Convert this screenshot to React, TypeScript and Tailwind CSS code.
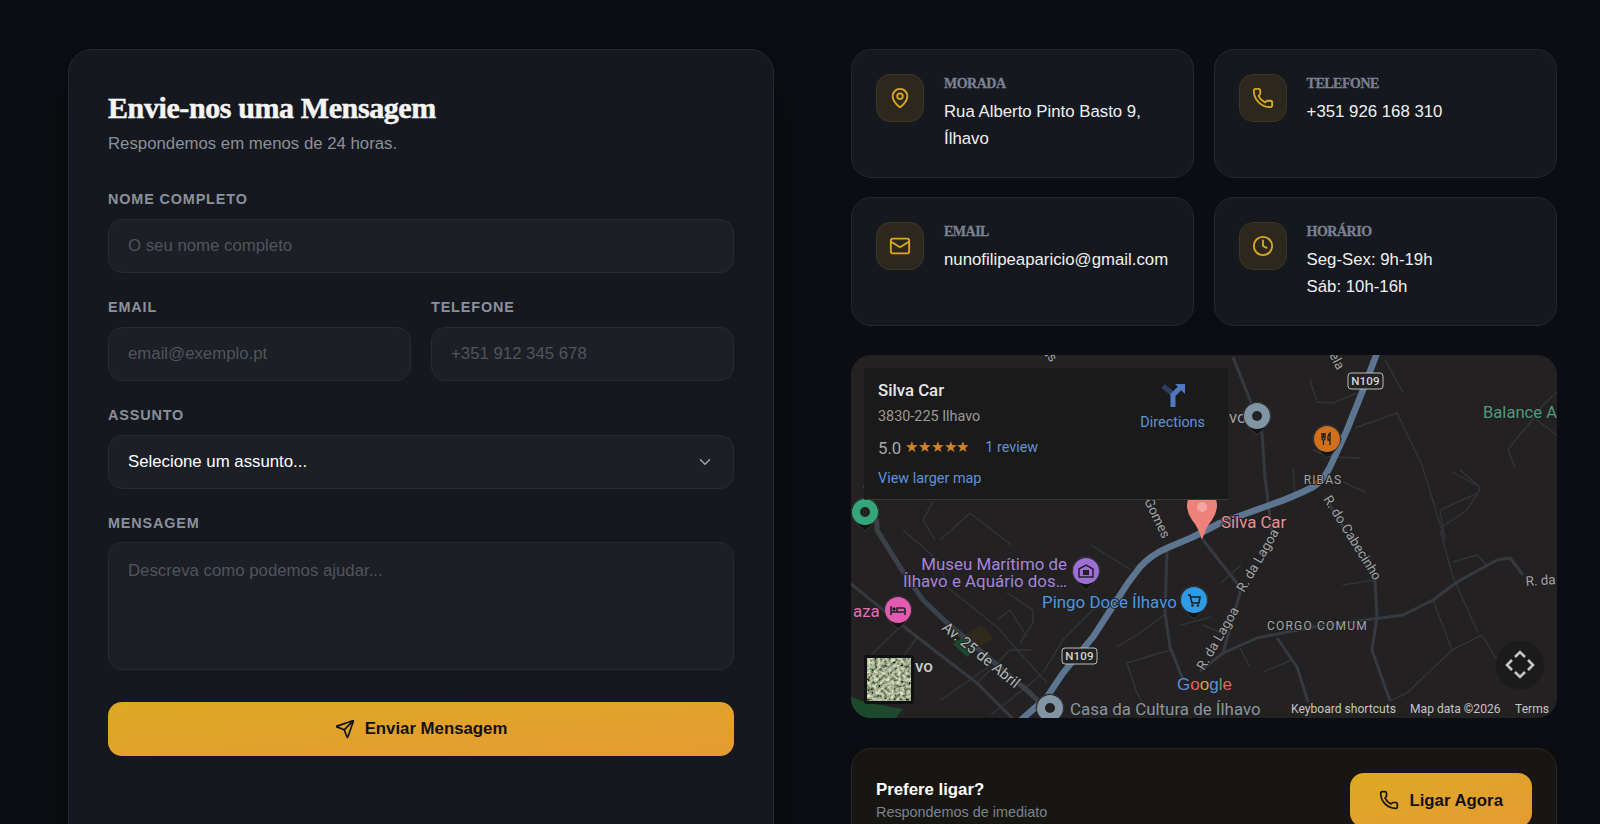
import React from 'react';
import { ChevronDown, Clock, Mail, MapPin, Phone, Send } from 'lucide-react';

const inputClass =
  "w-full h-[54px] rounded-[14px] border border-[#272a33] bg-[#1c1f26] px-[19px] text-[16.8px] text-white outline-none placeholder:text-[#50545c]";

const Label: React.FC<{ children: React.ReactNode }> = ({ children }) => (
  <label className="block mb-[10px] h-5 text-[14.4px] leading-5 font-bold uppercase tracking-[0.06em] text-[#8b909a]">
    {children}
  </label>
);

interface InfoCardProps {
  icon: React.ReactNode;
  title: string;
  lines: string[];
}

const InfoCard: React.FC<InfoCardProps> = ({ icon, title, lines }) => (
  <div className="flex min-h-[129px] gap-5 rounded-[20px] border border-[#242730] bg-[#15181f] p-6">
    <div className="flex h-12 w-12 shrink-0 items-center justify-center rounded-[14px] border border-[#3e3623] bg-[#2d281d] text-[#dca823]">
      {icon}
    </div>
    <div>
      <div className="mb-1 h-5 font-['Liberation_Serif'] text-sm leading-5 font-bold uppercase tracking-[-0.5px] text-[#7b8090] [-webkit-text-stroke:0.3px]">{title}</div>
      {lines.map((line) => (
        <div key={line} className="text-[16.8px] leading-[27.2px] text-[#f0f0f0]">{line}</div>
      ))}
    </div>
  </div>
);

const mainRoad = "M526,-2 L512,35 L496,75 L479,112 Q472,126 462,132 Q440,143 419,150 L369,168 L342,182 L316,193 Q300,200 289,212 Q276,228 266,245 L242,282 L212,318 L196,342 L169,366";

const avenue = "M14,130 L26,168 L26,175 L49,212 L72,245 L96,268 L132,298 L179,338 L199,358";

const wideRoads = [
  "M372,298 L406,283 L462,272 L522,264 L552,260 L582,245 L606,227 L646,205 L659,203 L672,220",
  "M352,185 L389,232 L389,238 L372,298 L349,316",
  "M474,142 L524,225 L526,262 L521,295 L539,346",
  "M-1,228 L36,258 L66,282 L126,328 L162,364",
  "M316,195 L314,258 L319,292 L332,325",
  "M426,283 L446,312 L457,347",
  "M382,2 L399,45 L411,78 L414,122 L421,178",
];

const thinRoads = [
  "M459,25 L466,47 L482,48 L506,38",
  "M504,73 L546,58 L571,110 L594,185",
  "M534,5 L552,37",
  "M462,95 L479,102 L509,103",
  "M442,112 L444,142",
  "M492,127 L514,137",
  "M706,37 L692,50 L679,68 L666,83 L657,95 L664,113",
  "M686,65 L706,80",
  "M601,117 L629,132 L627,138 L589,155 L594,185",
  "M609,115 L629,132",
  "M627,138 L616,155 L591,172",
  "M492,230 L524,225",
  "M582,245 L601,295 L556,338 L539,346",
  "M601,295 L631,280 L646,305",
  "M589,175 L602,222 L627,278",
  "M602,207 L626,200 L636,210",
  "M389,293 L399,312",
  "M412,317 L441,305",
  "M52,175 L72,192 L89,208 L96,232 L146,272 L196,328",
  "M156,238 L182,255 L182,268 L169,288",
  "M146,265 L159,255 L176,282",
  "M192,318 L212,285 L242,255 L272,238",
  "M276,308 L319,295",
  "M266,292 L289,278 L316,258",
  "M276,308 L286,338 L299,362",
  "M126,328 L159,295 L180,295",
  "M82,147 L72,165 L84,185",
  "M89,185 L119,158 L160,190",
  "M49,272 L20,300",
  "M66,282 L40,320",
  "M240,190 L280,215",
  "M90,345 L140,310",
  "M140,360 L190,320",
  "M330,270 L360,262",
  "M370,228 L390,210",
  "M352,270 L375,280",
];

const Pin: React.FC<{ x: number; y: number; r?: number; color: string; children?: React.ReactNode }> = ({ x, y, r = 10, color, children }) => (
  <g transform={`translate(${x} ${y})`}>
    <path
      d={`M${-(r + 4)},0 A${r + 4},${r + 4} 0 1 1 ${r + 4},0 Q${r + 3},${r - 1} 0,${r + 9} Q${-(r + 3)},${r - 1} ${-(r + 4)},0 Z`}
      fill="#141414"
      stroke="#3a3a3a"
      strokeWidth={1}
    />
    <circle r={r + 3} fill={color} />
    {children}
  </g>
);

const MapLabel: React.FC<{ x: number; y: number; rot?: number; size?: number; fill?: string; anchor?: 'start' | 'middle' | 'end'; spacing?: number; weight?: number; children: React.ReactNode }> = ({
  x, y, rot = 0, size = 13.4, fill = '#a0a4a8', anchor = 'start', spacing = 0, weight = 400, children,
}) => (
  <text
    x={x}
    y={y}
    transform={rot ? `rotate(${rot} ${x} ${y})` : undefined}
    fontSize={size}
    fill={fill}
    textAnchor={anchor}
    letterSpacing={spacing}
    fontWeight={weight}
    stroke="#212020"
    strokeWidth={2}
    paintOrder="stroke"
  >
    {children}
  </text>
);

const RoadBadge: React.FC<{ x: number; y: number }> = ({ x, y }) => (
  <g>
    <rect x={x} y={y} width={35} height={16} rx={3} fill="#222" stroke="#bdbdbd" strokeWidth={1} />
    <text x={x + 17.5} y={y + 12} textAnchor="middle" fontSize={11.5} fontWeight={500} letterSpacing={0.2} fill="#d4d4d4">N109</text>
  </g>
);

const GoogleMap: React.FC = () => (
  <div className="relative mt-[29px] h-[363px] overflow-hidden rounded-[20px] bg-[#232122] font-['Roboto']">
    <svg viewBox="0 0 706 363" className="block h-full w-full">
      <defs>
        <filter id="sat" x="0" y="0" width="100%" height="100%">
          <feTurbulence type="fractalNoise" baseFrequency="0.3" numOctaves="3" seed="11" />
          <feColorMatrix values="1.3 0.3 0 0 -0.42  1.3 0.35 0 0 -0.4  1 0.3 0 0 -0.36  0 0 0 0 1" />
        </filter>
      </defs>

      {/* parks */}
      <path d="M-2,340 Q10,348 30,350 L52,354 L42,366 L-2,366 Z" fill="#1d4a2c" />
      <path d="M102,289 L114,280 L127,293 L116,302 Z" fill="#1d4a2c" />
      <path d="M114,280 L130,270 L143,283 L127,293 Z" fill="#302a1c" />

      {thinRoads.map((d) => (
        <path key={d} d={d} fill="none" stroke="#31353a" strokeWidth={1.4} strokeLinejoin="round" />
      ))}
      {wideRoads.map((d) => (
        <path key={d} d={d} fill="none" stroke="#353a40" strokeWidth={3} strokeLinejoin="round" />
      ))}
      <path d={avenue} fill="none" stroke="#3a4149" strokeWidth={5} strokeLinejoin="round" />
      <path d={mainRoad} fill="none" stroke="#5d7590" strokeWidth={6.5} strokeLinejoin="round" />

      <RoadBadge x={497} y={18} />
      <RoadBadge x={211} y={293} />

      <MapLabel x={191} y={-3} rot={50}>as</MapLabel>
      <MapLabel x={478} y={0} rot={62}>ela</MapLabel>
      <MapLabel x={378} y={68} size={16.8} fill="#9aa0a6">vo</MapLabel>
      <MapLabel x={632} y={63} size={16.6} fill="#4f9b7c">Balance A</MapLabel>
      <MapLabel x={472} y={129} size={12} anchor="middle" spacing={1.1}>RIBAS</MapLabel>
      <MapLabel x={472} y={144} rot={58}>R. do Cabecinho</MapLabel>
      <MapLabel x={393} y={238} rot={-60}>R. da Lagoa</MapLabel>
      <MapLabel x={353} y={316} rot={-60}>R. da Lagoa</MapLabel>
      <MapLabel x={675} y={231} rot={-4}>R. da</MapLabel>
      <MapLabel x={416} y={275} size={12} spacing={1.2}>CORGO COMUM</MapLabel>
      <MapLabel x={293} y={146} rot={64}>Gomes</MapLabel>
      <MapLabel x={90} y={274} size={15} rot={39} fill="#b4b8bc">Av. 25 de Abril</MapLabel>

      <MapLabel x={216} y={215} size={16.9} anchor="end" fill="#a585d8">Museu Marítimo de</MapLabel>
      <MapLabel x={216} y={232} size={16.9} anchor="end" fill="#a585d8">Ílhavo e Aquário dos…</MapLabel>
      <MapLabel x={191} y={253} size={16.9} fill="#4d98e0">Pingo Doce Ílhavo</MapLabel>
      <MapLabel x={2} y={262} size={16.9} fill="#e36fb5">aza</MapLabel>
      <MapLabel x={64} y={317} size={17} weight={500} fill="#c9c9c9">vo</MapLabel>
      <MapLabel x={219} y={360} size={16.9} fill="#8a969f">Casa da Cultura de Ílhavo</MapLabel>
      <MapLabel x={370} y={173} size={16.8} fill="#ef9090">Silva Car</MapLabel>

      <Pin x={14} y={157} color="#35a67c"><circle r={5} fill="#222" /></Pin>
      <Pin x={406} y={61} color="#8295a5"><circle r={5} fill="#222" /></Pin>
      <Pin x={199} y={353} color="#8295a5"><circle r={5} fill="#222" /></Pin>
      <Pin x={476} y={84} color="#d0701f">
        <path d="M-5,-6 V-1 Q-5,1 -3.5,1 V6 M-2,-6 V-1 Q-2,1 -3.5,1 M-3.5,-6 V-1 M3,6 V-6 Q0.5,-4 1,1 H3" fill="none" stroke="#1d1d1d" strokeWidth={1.3} />
      </Pin>
      <Pin x={235} y={216} color="#9d6fd6">
        <path d="M-7,-2 L0,-6 L7,-2 V6 H-7 Z" fill="none" stroke="#222" strokeWidth={1.5} />
        <rect x={-3} y={-1} width={6} height={5} fill="#222" />
      </Pin>
      <Pin x={47} y={255} color="#e25ab2">
        <path d="M-7,-4 V5 M-7,2 H7 V5 M7,2 V-1 Q7,-2 5,-2 H-1 V2" fill="none" stroke="#222" strokeWidth={1.6} />
        <circle cx={-4} cy={-1} r={1.7} fill="#222" />
      </Pin>
      <Pin x={343} y={245} color="#2f9be4">
        <path d="M-6,-5 H-4 L-2,3 H5 L6,-3 H-3" fill="none" stroke="#1d1d1d" strokeWidth={1.6} />
        <circle cx={-1.5} cy={5.5} r={1.3} fill="#1d1d1d" />
        <circle cx={4} cy={5.5} r={1.3} fill="#1d1d1d" />
      </Pin>

      {/* red marker */}
      <path d="M351,185 Q347,172 341,165 Q336,158 336,150 A15,15 0 0 1 366,150 Q366,158 361,165 Q355,172 351,185 Z" fill="#ee8179" />
      <circle cx={351} cy={152} r={5} fill="#f3a69f" />

      {/* satellite thumbnail */}
      <rect x={13} y={300} width={50} height={49} rx={3} fill="#111" />
      <rect x={16} y={303} width={44} height={43} filter="url(#sat)" />

      {/* google logo */}
      <text x={326} y={335} fontSize={17} fontFamily="'Liberation Sans', sans-serif">
        <tspan fill="#5d8fd8">G</tspan>
        <tspan fill="#e0655b">o</tspan>
        <tspan fill="#d9a035">o</tspan>
        <tspan fill="#5d8fd8">g</tspan>
        <tspan fill="#4ea76b">l</tspan>
        <tspan fill="#e0655b">e</tspan>
      </text>

      {/* attribution */}
      <g fontSize={12.1} fill="#c6c6c6">
        <text x={440} y={358}>Keyboard shortcuts</text>
        <text x={559} y={358}>Map data ©2026</text>
        <text x={664} y={358}>Terms</text>
      </g>

      {/* camera control */}
      <circle cx={669} cy={310} r={24} fill="#1b1b1b" />
      <path d="M664,302 L669,297 L674,302 M664,317 L669,322 L674,317 M661,305 L656,310 L661,315 M677,305 L682,310 L677,315" fill="none" stroke="#c6c6c6" strokeWidth={2.6} />
    </svg>

    <div className="absolute left-[13px] top-[13px] flex h-[132px] w-[364px] justify-between border-b border-[#3a3a3a] bg-[#1a1a1a] pt-[12px] pl-[14px] pr-[23px]">
      <div>
        <div className="text-[16.8px] leading-5 font-medium text-[#e6e6e6]">Silva Car</div>
        <div className="mt-2 text-[14.4px] leading-[18px] text-[#9a9a9a]">3830-225 Ilhavo</div>
        <div className="mt-3 flex h-5 items-center text-[16.8px] text-[#a8a8a8]">
          5.0
          <span className="ml-[4px] text-[15.4px] leading-none tracking-[-0.2px] text-[#d08428]">★★★★★</span>
          <span className="ml-[16px] text-[14.4px] text-[#5f92d8]">1 review</span>
        </div>
        <div className="mt-3 text-[14.4px] leading-[18px] text-[#5f92d8]">View larger map</div>
      </div>
      <div className="flex flex-col items-center pt-[3px]">
        <svg width="24" height="24" viewBox="0 0 24 24">
          <path d="M2,3 L12,11" fill="none" stroke="#2c3f63" strokeWidth={5} />
          <path d="M12,24 V12 L19,5" fill="none" stroke="#4f78c0" strokeWidth={5} />
          <path d="M14,1 H24 V11 Z" fill="#4f78c0" />
        </svg>
        <div className="mt-[7px] text-[14.4px] leading-[18px] text-[#5f92d8]">Directions</div>
      </div>
    </div>
  </div>
);

const App: React.FC = () => {
  return (
    <div className="flex h-[824px] items-start gap-[77px] overflow-hidden bg-[#0b0d12] pt-[49px] pr-[43px] pl-[68px] font-['Liberation_Sans',sans-serif]">
      {/* Form */}
      <div className="h-[900px] w-[706px] shrink-0 rounded-[24px] border border-[#262932] bg-[#15181f] px-[39px] pt-[38px] shadow-[0_25px_50px_-12px_rgba(0,0,0,0.5)]">
        <h2 className="font-['Liberation_Serif'] text-[30px] leading-10 font-bold tracking-[-0.4px] text-[#f5f5f5] [-webkit-text-stroke:0.5px]">Envie-nos uma Mensagem</h2>
        <p className="mt-1 text-[16.8px] leading-6 text-[#8b909a]">Respondemos em menos de 24 horas.</p>

        <div className="mt-[33px]">
          <Label>Nome Completo</Label>
          <input className={inputClass} placeholder="O seu nome completo" />
        </div>

        <div className="mt-6 grid grid-cols-2 gap-5">
          <div>
            <Label>Email</Label>
            <input className={inputClass} placeholder="email@exemplo.pt" />
          </div>
          <div>
            <Label>Telefone</Label>
            <input className={inputClass} placeholder="+351 912 345 678" />
          </div>
        </div>

        <div className="mt-6">
          <Label>Assunto</Label>
          <div className="relative">
            <select className={`${inputClass} appearance-none`} defaultValue="">
              <option value="">Selecione um assunto...</option>
            </select>
            <ChevronDown size={18} className="pointer-events-none absolute right-5 top-[18px] text-[#9ca3af]" />
          </div>
        </div>

        <div className="mt-6">
          <Label>Mensagem</Label>
          <textarea
            className="block -mt-[1px] h-[128px] w-full resize-none rounded-[14px] border border-[#272a33] bg-[#1c1f26] px-[19px] py-[15px] text-[16.8px] text-white outline-none placeholder:text-[#50545c]"
            placeholder="Descreva como podemos ajudar..."
          />
        </div>

        <button className="mt-8 flex h-[54px] w-full items-center justify-center gap-[10px] rounded-[14px] bg-gradient-to-br from-[#dda923] to-[#e69a32] text-[16.8px] font-bold text-[#111]">
          <Send size={20} />
          Enviar Mensagem
        </button>
      </div>

      {/* Info */}
      <div className="w-[706px] shrink-0">
        <div className="grid grid-cols-2 gap-[19.2px]">
          <InfoCard icon={<MapPin size={22} />} title="Morada" lines={['Rua Alberto Pinto Basto 9,', 'Ílhavo']} />
          <InfoCard icon={<Phone size={22} />} title="Telefone" lines={['+351 926 168 310']} />
          <InfoCard icon={<Mail size={22} />} title="Email" lines={['nunofilipeaparicio@gmail.com']} />
          <InfoCard icon={<Clock size={22} />} title="Horário" lines={['Seg-Sex: 9h-19h', 'Sáb: 10h-16h']} />
        </div>

        <GoogleMap />

        <div className="mt-[30px] flex items-center justify-between rounded-[20px] border border-[#2a261b] bg-[#171613] p-6">
          <div>
            <div className="text-[16.8px] leading-6 font-bold text-white">Prefere ligar?</div>
            <div className="text-[14.4px] leading-5 text-[#7f838c]">Respondemos de imediato</div>
          </div>
          <button className="flex h-[54px] items-center gap-[10px] rounded-[14px] bg-gradient-to-br from-[#dda923] to-[#e69a32] px-[29px] text-[16.8px] font-bold text-[#111]">
            <Phone size={20} />
            Ligar Agora
          </button>
        </div>
      </div>
    </div>
  );
};

export default App;
